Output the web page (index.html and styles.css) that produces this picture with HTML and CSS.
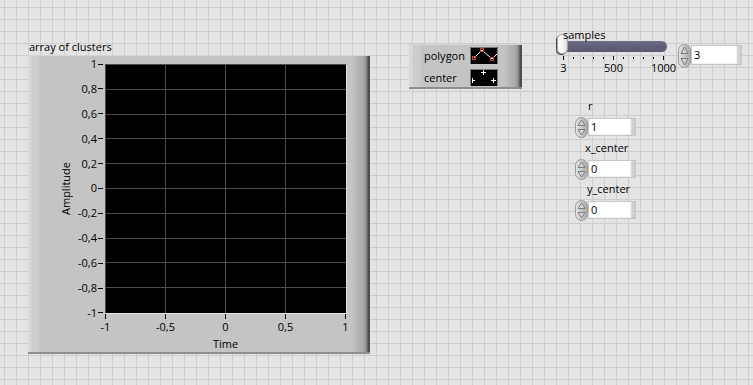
FILE: index.html
```html
<!DOCTYPE html>
<html>
<head>
<meta charset="utf-8">
<link rel="stylesheet" href="styles.css">
</head>
<body>
<div class="panel">

  <div class="graph">
    <div class="ctl-label">array of clusters</div>
    <div class="graph-frame raised">
      <div class="y-title">Amplitude</div>
      <div class="y-scale">
        <div class="y-tick"><span>1</span><i></i></div>
        <div class="y-tick"><span>0,8</span><i></i></div>
        <div class="y-tick"><span>0,6</span><i></i></div>
        <div class="y-tick"><span>0,4</span><i></i></div>
        <div class="y-tick"><span>0,2</span><i></i></div>
        <div class="y-tick"><span>0</span><i></i></div>
        <div class="y-tick"><span>-0,2</span><i></i></div>
        <div class="y-tick"><span>-0,4</span><i></i></div>
        <div class="y-tick"><span>-0,6</span><i></i></div>
        <div class="y-tick"><span>-0,8</span><i></i></div>
        <div class="y-tick"><span>-1</span><i></i></div>
      </div>
      <div class="plot">
        <svg width="241" height="249" viewBox="0 0 241 249">
          <g stroke="#4d4d4d" stroke-width="1" shape-rendering="crispEdges">
            <line x1="0.5" y1="0" x2="0.5" y2="249"/>
            <line x1="60.5" y1="0" x2="60.5" y2="249"/>
            <line x1="120.5" y1="0" x2="120.5" y2="249"/>
            <line x1="180.5" y1="0" x2="180.5" y2="249"/>
            <line x1="0" y1="0.5" x2="241" y2="0.5"/>
            <line x1="0" y1="25.5" x2="241" y2="25.5"/>
            <line x1="0" y1="50.5" x2="241" y2="50.5"/>
            <line x1="0" y1="74.5" x2="241" y2="74.5"/>
            <line x1="0" y1="99.5" x2="241" y2="99.5"/>
            <line x1="0" y1="124.5" x2="241" y2="124.5"/>
            <line x1="0" y1="149.5" x2="241" y2="149.5"/>
            <line x1="0" y1="174.5" x2="241" y2="174.5"/>
            <line x1="0" y1="198.5" x2="241" y2="198.5"/>
            <line x1="0" y1="223.5" x2="241" y2="223.5"/>
          </g>
        </svg>
      </div>
      <div class="x-ticks"><i></i><i></i><i></i><i></i><i></i></div>
      <div class="x-labels"><span>-1</span><span>-0,5</span><span>0</span><span>0,5</span><span>1</span></div>
      <div class="x-title">Time</div>
    </div>
  </div>

  <div class="cluster raised">
    <div class="cl-label">polygon</div>
    <svg class="cl-icon" width="28" height="17" viewBox="0 0 28 17">
      <rect x="0" y="0" width="28" height="17" fill="#000"/>
      <path d="M0 0.5H27.5V17M0.5 0V17" fill="none" stroke="#7a7a7a"/>
      <polyline points="4,11 12,3 22,12 27,7" fill="none" stroke="#fff" stroke-width="1"/>
      <g fill="none" stroke="#c8442c" stroke-width="1" shape-rendering="crispEdges">
        <rect x="2.5" y="9.5" width="3" height="3"/>
        <rect x="10.5" y="1.5" width="3" height="3"/>
        <rect x="20.5" y="10.5" width="3" height="3"/>
      </g>
    </svg>
    <div class="cl-label">center</div>
    <svg class="cl-icon" width="28" height="17" viewBox="0 0 28 17">
      <rect x="0" y="0" width="28" height="17" fill="#000"/>
      <path d="M0 0.5H27.5V17M0.5 0V17" fill="none" stroke="#7a7a7a"/>
      <g stroke="#fff" stroke-width="1" shape-rendering="crispEdges">
        <line x1="11" y1="3.5" x2="16" y2="3.5"/>
        <line x1="13.5" y1="1" x2="13.5" y2="6"/>
        <line x1="2" y1="11.5" x2="5" y2="11.5"/>
        <line x1="2.5" y1="9" x2="2.5" y2="14"/>
        <line x1="21" y1="11.5" x2="26" y2="11.5"/>
        <line x1="23.5" y1="9" x2="23.5" y2="14"/>
      </g>
    </svg>
  </div>

  <div class="slider">
    <div class="slider-label">samples</div>
    <div class="track-wrap">
      <div class="track"></div>
      <div class="thumb"></div>
    </div>
    <div class="scale-ticks">
      <i class="major"></i><i></i><i></i><i></i><i></i><i class="major"></i><i></i><i></i><i></i><i></i><i class="major"></i>
    </div>
    <div class="scale-labels"><span>3</span><span>500</span><span>1000</span></div>
  </div>

  <div class="numeric num-samples">
    <div class="num-row">
      <svg class="spin" width="13" height="24" viewBox="0 0 13 24">
        <defs>
          <linearGradient id="sg1" x1="0" y1="0" x2="1" y2="0">
            <stop offset="0" stop-color="#e6e6e6"/>
            <stop offset="1" stop-color="#a8a8a8"/>
          </linearGradient>
        </defs>
        <rect x="0.5" y="0.5" width="12" height="23" rx="6" fill="url(#sg1)" stroke="#9c9c9c"/>
        <path d="M6.5 3 L3 9.5 H10 Z" fill="#d4d4d4" stroke="#7c7c7c" stroke-linejoin="round"/>
        <path d="M3 14.5 H10 L6.5 21 Z" fill="#d4d4d4" stroke="#7c7c7c" stroke-linejoin="round"/>
      </svg>
      <div class="num-box wide">3</div>
    </div>
  </div>

  <div class="numeric num-r">
    <div class="num-label">r</div>
    <div class="num-row">
      <svg class="spin" width="13" height="21" viewBox="0 0 13 21">
        <defs>
          <linearGradient id="sg2" x1="0" y1="0" x2="1" y2="0">
            <stop offset="0" stop-color="#e6e6e6"/>
            <stop offset="1" stop-color="#a8a8a8"/>
          </linearGradient>
        </defs>
        <rect x="0.5" y="0.5" width="12" height="20" rx="6" fill="url(#sg2)" stroke="#9c9c9c"/>
        <path d="M6.5 3 L3 8.5 H10 Z" fill="#d4d4d4" stroke="#7c7c7c" stroke-linejoin="round"/>
        <path d="M3 12.5 H10 L6.5 18 Z" fill="#d4d4d4" stroke="#7c7c7c" stroke-linejoin="round"/>
      </svg>
      <div class="num-box">1</div>
    </div>
  </div>

  <div class="numeric num-x">
    <div class="num-label">x_center</div>
    <div class="num-row">
      <svg class="spin" width="13" height="21" viewBox="0 0 13 21">
        <rect x="0.5" y="0.5" width="12" height="20" rx="6" fill="url(#sg2)" stroke="#9c9c9c"/>
        <path d="M6.5 3 L3 8.5 H10 Z" fill="#d4d4d4" stroke="#7c7c7c" stroke-linejoin="round"/>
        <path d="M3 12.5 H10 L6.5 18 Z" fill="#d4d4d4" stroke="#7c7c7c" stroke-linejoin="round"/>
      </svg>
      <div class="num-box">0</div>
    </div>
  </div>

  <div class="numeric num-y">
    <div class="num-label">y_center</div>
    <div class="num-row">
      <svg class="spin" width="13" height="21" viewBox="0 0 13 21">
        <rect x="0.5" y="0.5" width="12" height="20" rx="6" fill="url(#sg2)" stroke="#9c9c9c"/>
        <path d="M6.5 3 L3 8.5 H10 Z" fill="#d4d4d4" stroke="#7c7c7c" stroke-linejoin="round"/>
        <path d="M3 12.5 H10 L6.5 18 Z" fill="#d4d4d4" stroke="#7c7c7c" stroke-linejoin="round"/>
      </svg>
      <div class="num-box">0</div>
    </div>
  </div>

</div>
</body>
</html>
```

FILE: styles.css
```css
html, body {
  margin: 0;
  padding: 0;
}

body {
  width: 753px;
  height: 385px;
  overflow: hidden;
  background-color: #e4e4e4;
  background-image:
    linear-gradient(to right, #cdcdcd 1px, transparent 1px),
    linear-gradient(to bottom, #cdcdcd 1px, transparent 1px);
  background-size: 12px 12px;
  background-position: 4px 7px;
  font-family: "Open Sans", "Noto Sans", sans-serif;
  font-size: 11px;
  line-height: 14px;
  color: #000;
}

.panel {
  position: relative;
  width: 753px;
  height: 385px;
}

/* raised LabVIEW-style frame */
.raised {
  background:
    linear-gradient(to right,
      #d9d9d9 0, #d9d9d9 3px,
      #cdcdcd 4px, #cdcdcd 11px,
      #c4c4c4 12px, #c4c4c4 calc(100% - 18px),
      #a6a6a6 calc(100% - 6px),
      #7c7c7c calc(100% - 3px),
      #4e4e4e calc(100% - 2px), #4e4e4e 100%);
  box-shadow: inset 0 1px 0 #d6d6d6, inset 0 -2px 0 #8e8e8e;
}

/* ---------- graph ---------- */
.graph {
  position: absolute;
  left: 28px;
  top: 40px;
  display: flex;
  flex-direction: column;
  gap: 1px;
}

.ctl-label {
  padding-left: 1px;
  white-space: nowrap;
}

.graph-frame {
  width: 342px;
  height: 299px;
  box-sizing: border-box;
  display: grid;
  grid-template-columns: 28px 20px 29px 241px 24px;
  grid-template-rows: 9px 249px 7px 14px 3px 14px 2px;
}

.y-title {
  grid-column: 2;
  grid-row: 2;
  writing-mode: vertical-rl;
  transform: rotate(180deg);
  display: flex;
  align-items: center;
  justify-content: center;
  white-space: nowrap;
}

.y-scale {
  grid-column: 3;
  grid-row: 2;
  display: flex;
  flex-direction: column;
  justify-content: space-between;
}

.y-tick {
  height: 0;
  display: flex;
  align-items: center;
  justify-content: flex-end;
}

.y-tick span {
  line-height: 14px;
  margin-right: 1px;
  white-space: nowrap;
}

.y-tick i {
  width: 5px;
  height: 1px;
  background: #000;
  margin-right: 2px;
}

.plot {
  grid-column: 4;
  grid-row: 2;
  background: #000;
  box-shadow: 1px 1px 0 #e2e2e2;
}

.plot svg {
  display: block;
}

.x-ticks {
  grid-column: 4;
  grid-row: 3;
  display: flex;
  justify-content: space-between;
  align-items: flex-start;
  padding: 1px 0 0 0;
}

.x-ticks i {
  width: 1px;
  height: 5px;
  background: #000;
}

.x-labels {
  grid-column: 4;
  grid-row: 4;
  display: flex;
  justify-content: space-between;
}

.x-labels span,
.scale-labels span {
  width: 1px;
  display: flex;
  justify-content: center;
  white-space: nowrap;
}

.x-title {
  grid-column: 4;
  grid-row: 6;
  text-align: center;
}

/* ---------- cluster ---------- */
.cluster {
  position: absolute;
  left: 409px;
  top: 44px;
  width: 113px;
  height: 45px;
  box-sizing: border-box;
  padding: 3px 24px 0 15px;
  display: grid;
  grid-template-columns: 1fr 28px;
  grid-auto-rows: 17px;
  row-gap: 5px;
  align-items: center;
}

.cl-label {
  line-height: 17px;
  white-space: nowrap;
}

.cl-icon {
  display: block;
}

/* ---------- slider ---------- */
.slider {
  position: absolute;
  left: 557px;
  top: 28px;
  width: 120px;
}

.slider-label {
  position: relative;
  z-index: 2;
  line-height: 13px;
  padding-left: 6px;
}

.track-wrap {
  position: relative;
  height: 11px;
  width: 109px;
  margin-left: 1px;
}

.track {
  height: 11px;
  border-radius: 6px;
  background: linear-gradient(to bottom, #6e6e86 0, #5f5f77 50%, #5a5a72 100%);
}

.thumb {
  position: absolute;
  left: -1px;
  top: -7px;
  width: 9px;
  height: 18px;
  border-radius: 5px;
  border: 1px solid #a4a4a4;
  background: linear-gradient(to right, #ffffff 0, #f2f2f2 60%, #d6d6d6 100%);
  box-shadow: -1px 1px 0 #4a4a4a;
  z-index: 1;
}

.scale-ticks {
  margin: 4px 0 0 6px;
  width: 101px;
  height: 5px;
  display: flex;
  justify-content: space-between;
  align-items: flex-start;
}

.scale-ticks i {
  width: 1px;
  height: 2px;
  margin-top: 1px;
  background: #000;
}

.scale-ticks i.major {
  height: 4px;
  margin-top: 0;
}

.scale-labels {
  margin-left: 6px;
  width: 101px;
  display: flex;
  justify-content: space-between;
}

/* ---------- numerics ---------- */
.numeric {
  position: absolute;
  display: flex;
  flex-direction: column;
}

.num-row {
  display: flex;
  align-items: flex-start;
  margin-top: 4px;
}

.spin {
  display: block;
}

.num-box {
  width: 48px;
  height: 18px;
  margin-top: 1px;
  box-sizing: border-box;
  background: #fff;
  border: 1px solid #c6c6c6;
  box-shadow: inset -6px -2px 2px -2px #cfcfcf;
  padding-left: 2px;
  line-height: 15px;
}

.num-box.wide {
  width: 51px;
  height: 20px;
  line-height: 18px;
}

.num-label {
  line-height: 14px;
  white-space: nowrap;
}

.num-samples {
  left: 678px;
  top: 40px;
}

.num-r {
  left: 575px;
  top: 99px;
}

.num-r .num-label {
  margin-left: 13px;
}

.num-x {
  left: 575px;
  top: 141px;
}

.num-x .num-label {
  margin-left: 10px;
}

.num-y {
  left: 575px;
  top: 182px;
}

.num-y .num-label {
  margin-left: 12px;
}
```
